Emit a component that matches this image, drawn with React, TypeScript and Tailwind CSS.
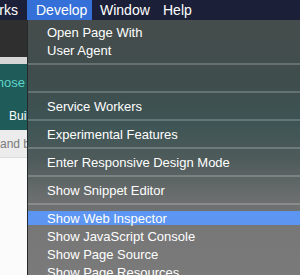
const font = { fontFamily: '"Liberation Sans", Arial, sans-serif' };

function Sep() {
  return (
    <div className="h-[10px] flex items-center">
      <div className="h-[2px] w-full bg-white/20" />
    </div>
  );
}

function Item({ label, active = false }: { label: string; active?: boolean }) {
  if (active) {
    return (
      <div className="h-[18px] py-[2px]">
        <div className="h-full bg-[#5c95f2] flex items-center pl-[19px] text-white text-[13px] leading-none whitespace-nowrap">
          {label}
        </div>
      </div>
    );
  }
  return (
    <div className="h-[18px] flex items-center pl-[19px] text-white text-[13px] leading-none whitespace-nowrap">
      {label}
    </div>
  );
}

export default function App() {
  return (
    <div className="w-[300px] h-[275px] overflow-hidden flex flex-col bg-white" style={font}>
      {/* menu bar */}
      <div className="h-5 flex items-center bg-[#1c1f38] text-white text-[14px] leading-none shrink-0">
        <div className="w-[27px] overflow-hidden flex justify-end pr-[9px] whitespace-nowrap">rks</div>
        <div className="h-full w-[65px] bg-[#3470d7] flex items-center pl-[9px]">Develop</div>
        <div className="pl-[8px] w-[71px]">Window</div>
        <div>Help</div>
      </div>

      <div className="flex flex-1 min-h-0">
        {/* window behind the menu */}
        <div className="w-[27px] shrink-0 flex flex-col overflow-hidden">
          <div className="h-[37px] bg-[#2f2f2f]" />
          <div className="h-[7px] bg-[#d6d6d6]" />
          <div className="h-[66px] bg-[#1f5b58] flex flex-col">
            <div className="h-[38px] flex items-center justify-end pr-[2px] text-[#5ed3c9] text-[13px] whitespace-nowrap">
              hose
            </div>
            <div className="flex-1 flex items-center pl-[9px] text-white text-[12px] whitespace-nowrap">Buil</div>
          </div>
          <div className="h-[28px] bg-[#ececec] flex items-center text-[#7a7a7a] text-[12px] whitespace-nowrap border-b border-[#dcdcdc]">
            and b
          </div>
          <div className="flex-1 bg-[#fbfbfb]" />
        </div>

        {/* dropdown */}
        <div className="flex-1 border-l border-[#262a2a] pt-[3px] bg-[linear-gradient(180deg,#464d4c_0%,#3f4d4d_25%,#3d5454_40%,#4f5b5b_55%,#6b6e6e_70%,#777777_82%,#7a7a7a_100%)]">
          <Item label="Open Page With" />
          <Item label="User Agent" />
          <Sep />
          <div className="h-[18px]" />
          <Sep />
          <Item label="Service Workers" />
          <Sep />
          <Item label="Experimental Features" />
          <Sep />
          <Item label="Enter Responsive Design Mode" />
          <Sep />
          <Item label="Show Snippet Editor" />
          <Sep />
          <Item label="Show Web Inspector" active />
          <Item label="Show JavaScript Console" />
          <Item label="Show Page Source" />
          <Item label="Show Page Resources" />
        </div>
      </div>
    </div>
  );
}
